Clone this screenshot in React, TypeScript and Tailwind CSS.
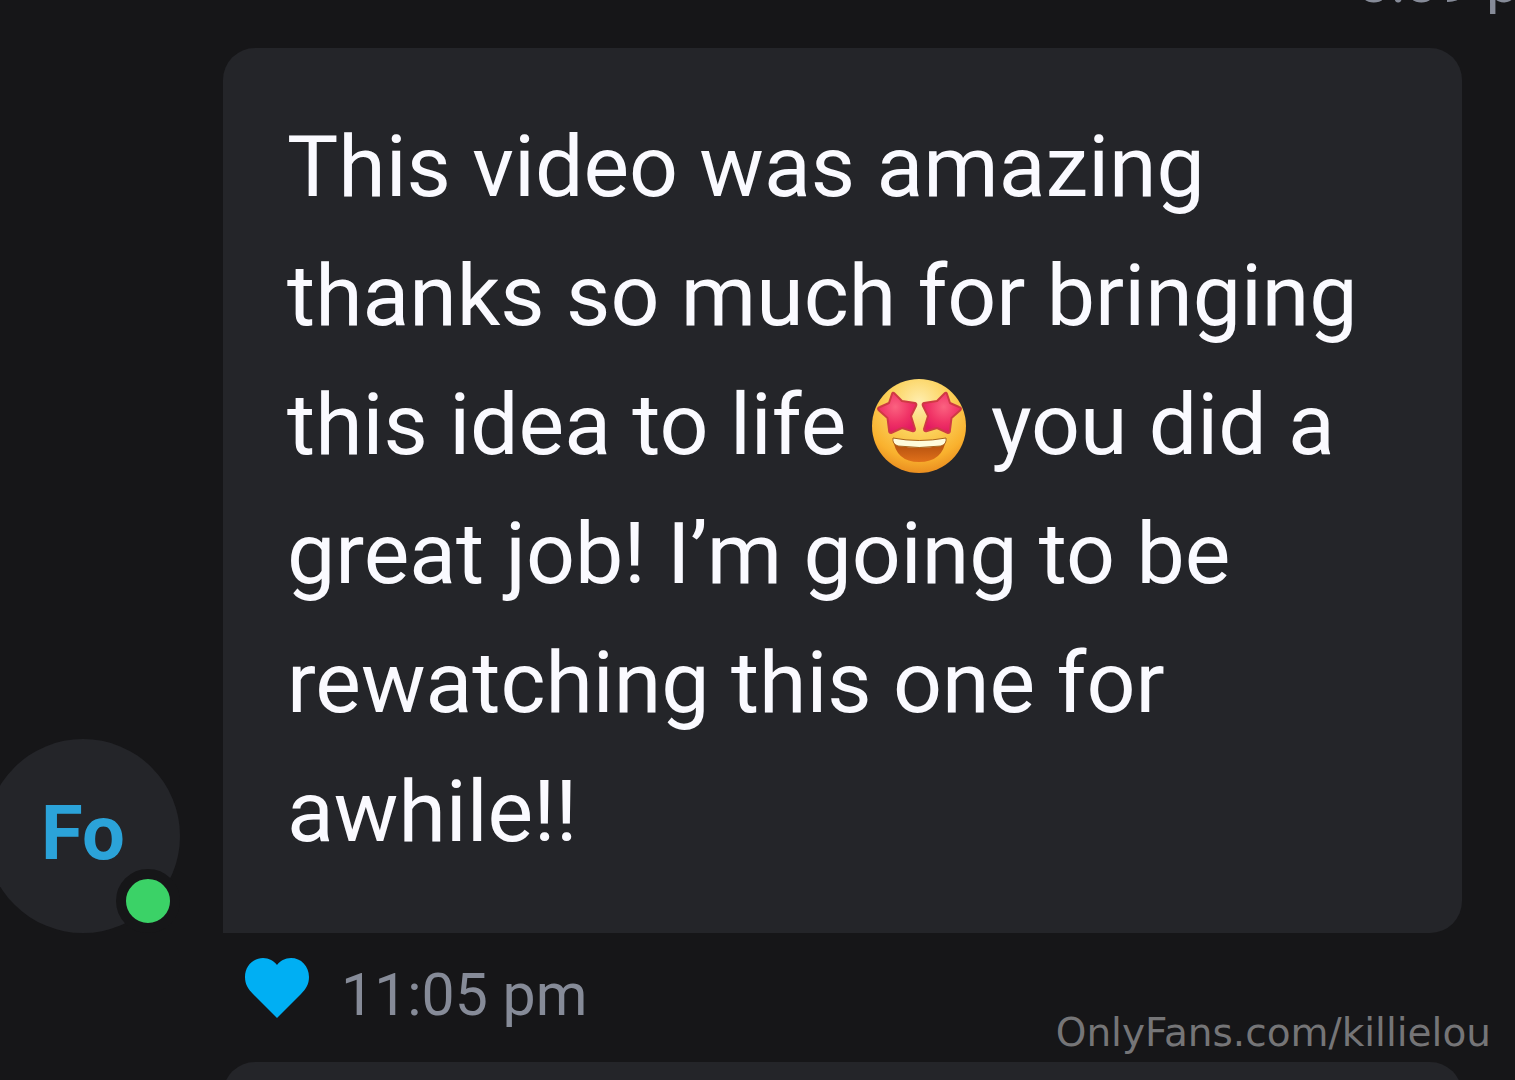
const STAR =
  'M22 14 L30 22 L43 24 Q45 25 44 27 L39 37 L43 50 Q43 53 40 52 L30 49 L19 54 Q17 54 17 51 L15.5 39 L6.5 31 Q5 29 8 28 L17 24 L20 15 Q21 13 22 14 Z'

function StarStruck() {
  return (
    <svg viewBox="0 0 94 94" className="mx-[4px] inline-block size-[94px] align-[-19px]" role="img" aria-label="star-struck">
      <defs>
        <radialGradient id="face" cx="0.5" cy="0.25" r="0.8">
          <stop offset="0" stopColor="#ffeeb0" />
          <stop offset="0.4" stopColor="#fbd25c" />
          <stop offset="0.75" stopColor="#f9b12e" />
          <stop offset="1" stopColor="#e5831c" />
        </radialGradient>
        <radialGradient id="star" cx="0.45" cy="0.35" r="0.65">
          <stop offset="0" stopColor="#fb6280" />
          <stop offset="0.6" stopColor="#f03366" />
          <stop offset="1" stopColor="#e21a60" />
        </radialGradient>
        <linearGradient id="mouth" x1="0" y1="0" x2="0" y2="1">
          <stop offset="0" stopColor="#a8480c" />
          <stop offset="1" stopColor="#e0701a" />
        </linearGradient>
      </defs>
      <circle cx="47" cy="47" r="47" fill="url(#face)" />
      <g fill="url(#star)" stroke="#cf3a44" strokeWidth="2" strokeLinejoin="round">
        <path d={STAR} />
        <path d={STAR} transform="translate(95 0) scale(-1 1)" />
      </g>
      <path d="M21 60 Q47 66 74 60 Q71 83 47 83 Q24 83 21 60 Z" fill="url(#mouth)" />
      <path d="M21 59 Q47 64 74 59 Q75 65 69 67 Q47 70 26 67 Q20 65 21 59 Z" fill="#fffbdc" stroke="#a8641c" strokeWidth="1" />
    </svg>
  )
}

function Avatar({ initials }: { initials: string }) {
  return (
    <div className="relative -ml-[14px] flex size-[194px] shrink-0 items-center justify-center rounded-full bg-[#242529] pb-[6px]">
      <span className="text-[76px] leading-[88px] font-bold text-[#2ba3d9]">{initials}</span>
      <span className="absolute right-0 bottom-0 size-[64px] rounded-full border-[10px] border-[#161618] bg-[#3bd267]" />
    </div>
  )
}

function Heart() {
  return (
    <svg viewBox="0 0 64 60" className="h-[60px] w-[64px]" fill="#00aff3" aria-hidden="true">
      <path d="M32 60 L8 36 C3 31 0 26 0 19 C0 8 8 0 18 0 C24 0 29 3 32 7 C35 3 40 0 46 0 C56 0 64 8 64 19 C64 26 61 31 56 36 Z" />
    </svg>
  )
}

export default function App() {
  return (
    <main className="relative h-screen overflow-hidden bg-[#161618] font-[Roboto,sans-serif] text-[#fafaff]">
      <div className="-mt-[50px] -mr-[56px] flex justify-end">
        <time className="text-[59px] leading-[64px] whitespace-nowrap text-[#868b98]">3:39 pm</time>
      </div>

      <div className="mt-[34px] mr-[53px] flex items-end gap-[43px]">
        <Avatar initials="Fo" />
        <div className="min-w-0 flex-1 rounded-[32px] rounded-bl-none bg-[#242529] px-[64px] pt-[54px] pb-[57px]">
          <p className="text-[86px] leading-[129px]">
            This video was amazing thanks so much for bringing this idea to life <StarStruck /> you did a great job! I’m
            going to be rewatching this one for awhile!!
          </p>
        </div>
      </div>

      <div className="ml-[223px] flex items-start pt-[25px] pl-[22px]">
        <button type="button" aria-label="Like">
          <Heart />
        </button>
        <time className="mt-[5px] ml-[32px] text-[59px] leading-[64px] text-[#868b98]">11:05 pm</time>
      </div>

      <div className="mt-[35px] mr-[53px] ml-[223px] h-[129px] rounded-[32px] bg-[#242529]" />

      <span className="absolute right-[24px] bottom-[23px] font-['DejaVu_Sans',sans-serif] text-[39px] leading-[48px] text-[#757577]">
        OnlyFans.com/killielou
      </span>
    </main>
  )
}
